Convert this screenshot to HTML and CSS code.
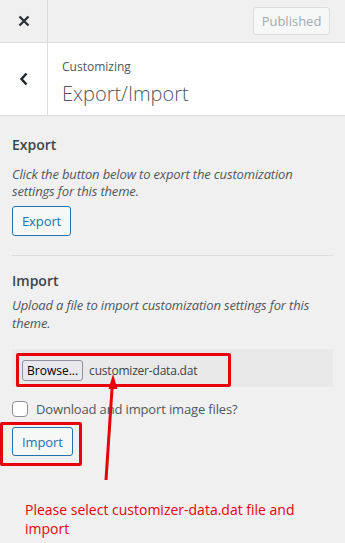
FILE: index.html
```html
<!DOCTYPE html>
<html lang="en">
  <head>
    <meta charset="UTF-8" />
    <meta name="viewport" content="width=device-width, initial-scale=1.0" />
    <title>Customizing Export/Import</title>
    <link rel="stylesheet" href="styles.css">
  </head>
  <body>
    <div class="sidebar">
      <div class="topbar">
        <div class="icon-cell">
          <svg width="12" height="12" viewBox="0 0 12 12">
            <path d="M1.5 1.5 L10.5 10.5 M10.5 1.5 L1.5 10.5" stroke="#2c3338" stroke-width="2.4" fill="none" />
          </svg>
        </div>
        <div class="topbar-actions">
          <button class="publish-btn" disabled>Published</button>
        </div>
      </div>

      <div class="section-title">
        <div class="icon-cell">
          <svg width="10" height="14" viewBox="0 0 10 14">
            <path d="M7.5 1.5 L2.5 7 L7.5 12.5" stroke="#1d2327" stroke-width="2.4" fill="none" />
          </svg>
        </div>
        <div class="title-text">
          <span class="title-sub">Customizing</span>
          <h3>Export/Import</h3>
        </div>
      </div>

      <div class="controls">
        <div class="control export">
          <h4>Export</h4>
          <p class="description">Click the button below to export the customization settings for this theme.</p>
          <button class="button">Export</button>
        </div>

        <hr />

        <div class="control import">
          <h4>Import</h4>
          <p class="description">Upload a file to import customization settings for this theme.</p>
          <div class="file-row">
            <div class="mark mark-file">
              <span class="browse">Browse...</span>
              <span class="file-name">customizer-data.dat</span>
            </div>
          </div>
          <label class="check">
            <span class="checkbox"></span>
            Download and import image files?
          </label>
          <div class="mark mark-import">
            <button class="button">Import</button>
          </div>
        </div>

        <p class="note">Please select customizer-data.dat file and import</p>
      </div>

      <!-- annotation arrow -->
      <svg class="arrow" width="345" height="543" viewBox="0 0 345 543">
        <line x1="106" y1="480" x2="112.2" y2="386" stroke="#e8000b" stroke-width="3" />
        <polygon points="113,374 108.5,389 117.5,389" fill="#e8000b" />
      </svg>
    </div>
  </body>
</html>
```

FILE: styles.css
```css
body {
  margin: 0;
  font-family: "Open Sans", "Noto Sans", sans-serif;
  background-color: #f0f0f1;
  color: #50575e;
}
.sidebar {
  position: relative;
  width: 345px;
  min-height: 543px;
}
.topbar {
  display: flex;
  height: 42px;
  border-bottom: 1px solid #dcdcde;
}
.icon-cell {
  width: 47px;
  border-right: 1px solid #dcdcde;
  display: flex;
  align-items: center;
  justify-content: center;
}
.topbar-actions {
  flex: 1;
  display: flex;
  align-items: center;
  justify-content: flex-end;
  padding-right: 15px;
}
.publish-btn {
  height: 28px;
  width: 77px;
  padding: 0;
  border: 1px solid #dcdcde;
  border-radius: 3px;
  background: #f6f7f7;
  color: #a7aaad;
  font-family: inherit;
  font-size: 13px;
}
.section-title {
  display: flex;
  height: 72px;
  background: #fff;
  border-bottom: 1px solid #dcdcde;
}
.title-text {
  padding: 15px 0 0 14px;
}
.title-sub {
  display: block;
  font-size: 12px;
  line-height: 18px;
  color: #50575e;
}
.title-text h3 {
  margin: 4px 0 0;
  font-size: 20px;
  font-weight: 300;
  line-height: 28px;
  color: #50575e;
}
.controls {
  padding: 19px 12px 0;
}
.control h4 {
  margin: 0;
  font-size: 14px;
  font-weight: 600;
  line-height: 20px;
  color: #3c434a;
}
.description {
  margin: 0;
  font-size: 13px;
  font-style: italic;
  line-height: 17px;
  letter-spacing: -0.15px;
  color: #50575e;
}
.export .description {
  margin-top: 11px;
}
.import .description {
  margin-top: 5px;
  line-height: 18px;
}
.button {
  height: 30px;
  padding: 0 9px;
  border: 1px solid #2271b1;
  border-radius: 3px;
  background: #f6f7f7;
  color: #2271b1;
  font-family: inherit;
  font-size: 13px;
  letter-spacing: -0.1px;
}
.export .button {
  margin-top: 6px;
}
hr {
  margin: 19px 0 15px;
  border: 0;
  border-top: 1px solid #dcdcde;
}
.file-row {
  margin-top: 17px;
  height: 38px;
  padding: 4px 0 0 4px;
  box-sizing: border-box;
  background: #e9e9ea;
}
.mark {
  border: 3px solid #e8000b;
  border-radius: 2px;
  box-sizing: border-box;
}
.mark-file {
  display: flex;
  align-items: center;
  width: 215px;
  height: 34px;
  padding-left: 3px;
}
.browse {
  height: 19px;
  padding: 0 4px;
  border: 1px solid #8f8f9d;
  border-radius: 3px;
  background: #e9e9ed;
  color: #000;
  font-size: 12px;
  line-height: 19px;
}
.file-name {
  margin-left: 6px;
  font-size: 12px;
  letter-spacing: -0.2px;
  color: #3c434a;
}
.check {
  display: flex;
  align-items: center;
  gap: 8px;
  margin-top: 14px;
  font-size: 13px;
  line-height: 16px;
  letter-spacing: -0.15px;
  color: #50575e;
}
.checkbox {
  width: 16px;
  height: 16px;
  box-sizing: border-box;
  border: 1px solid #8c8f94;
  border-radius: 4px;
  background: #fff;
}
.mark-import {
  width: 82px;
  height: 44px;
  margin: 5px 0 0 -12px;
  padding: 2px 0 0 9px;
}
.mark-import .button {
  height: 29px;
}
.note {
  margin: 34px 0 0;
  padding-left: 13px;
  max-width: 285px;
  font-size: 14px;
  line-height: 19px;
  color: #e8000b;
}
.arrow {
  position: absolute;
  top: 0;
  left: 0;
  pointer-events: none;
}
```
